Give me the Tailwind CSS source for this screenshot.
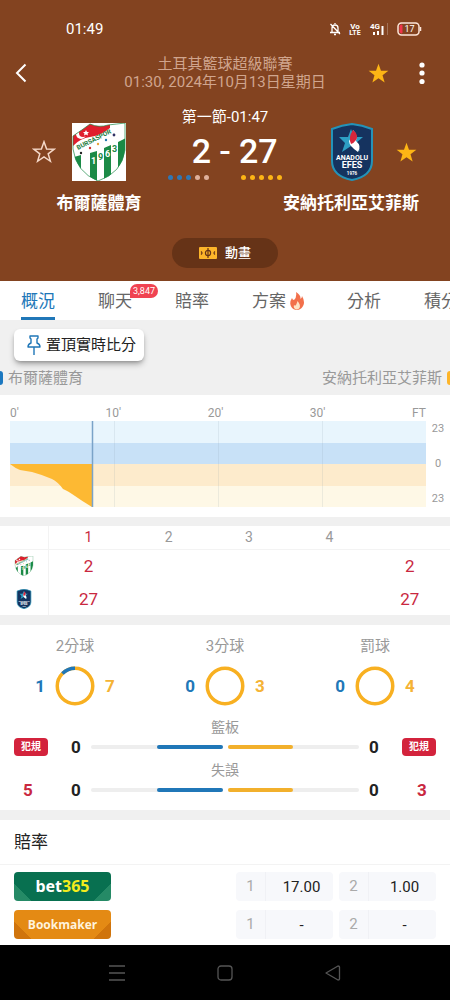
<!DOCTYPE html>
<html lang="zh-Hant">
<head>
    <meta charset="UTF-8">
    <meta name="viewport" content="width=device-width, initial-scale=1.0">
    <title>布爾薩體育 - 安納托利亞艾菲斯</title>
    <script src="https://cdn.jsdelivr.net/npm/@tailwindcss/browser@4"></script>
</head>
<body class="bg-[#f0f0f0] min-h-screen flex flex-col overflow-x-hidden font-['Roboto','Noto_Sans_CJK_TC',sans-serif] text-[15px] leading-5 text-[#222]">
    <!-- 隊徽 -->
    <svg class="absolute w-0 h-0">
        <clipPath id="bursaClip"><path d="M1 13Q10 7 18 1Q27 5 36 2Q45 1 53 0V27Q50 50 26 58Q4 49 1 26Z"/></clipPath>
        <symbol id="bursa" viewBox="0 0 54 58">
            <g clip-path="url(#bursaClip)">
                <path fill="#fff" d="M0 0h54v58H0z"/>
                <path fill="#1b8a46" d="M2 34l7-2v26H2zM18 30l7-2v30h-7zM32 25l7-3v36h-7zM46 19l8-4v43h-8z"/>
                <path fill="#e01e2d" d="M0 0h38V5Q28 13 18 14Q8 15 0 24Z"/>
                <circle cx="9" cy="11" r="5" fill="#fff"/>
                <circle cx="11" cy="10" r="4" fill="#e01e2d"/>
                <path fill="#fff" d="M14 7l1 2 2 0-1.500 1.500.5 2-2-1-2 1 .5-2L11 9h2z"/>
                <path fill="#fff" d="M1 24Q12 17 28 12Q40 9 48 1l5 10Q40 20 26 24Q12 28 3 32Z"/>
                <circle cx="9" cy="30" r="1.200" fill="#222"/><circle cx="18" cy="25" r="1.200" fill="#c33"/>
                <circle cx="26" cy="21" r="1.200" fill="#e8a33a"/><circle cx="34" cy="17" r="1.200" fill="#27a"/>
                <circle cx="42" cy="12" r="1.400" fill="#336"/>
            </g>
            <path d="M1 13Q10 7 18 1Q27 5 36 2Q45 1 53 0V27Q50 50 26 58Q4 49 1 26Z" fill="none" stroke="#1b8a46" stroke-width=".7"/>
            <text x="6" y="27" transform="rotate(-27 6 27)" font-size="6.500" font-weight="700" fill="#1b7a40">BURSASPOR</text>
            <g font-size="9" font-weight="700">
                <text x="19" y="41" fill="#fff">1</text><text x="26" y="37" fill="#1b8a46">9</text>
                <text x="33" y="34" fill="#fff">6</text><text x="40" y="29" fill="#1b8a46">3</text>
            </g>
        </symbol>
        <symbol id="efes" viewBox="0 0 44 58">
            <path d="M22 1Q32 2 42 6V38Q42 53 22 57Q2 53 2 38V6Q12 2 22 1Z" fill="#15335f" stroke="#2493b8" stroke-width="2"/>
            <path d="M21 6l3 8 9 0-7 6 4 8-9-5-9 6 3-9-6-6h9z" fill="#2d9fc4"/>
            <path d="M23 7Q28 12 26 18Q32 23 28 29Q19 23 19 18Q22 14 23 7Z" fill="#fff"/>
            <path d="M23 7Q29 12 26 17Q24 20 21 21Q18 14 23 7Z" fill="#d8263c"/>
            <g fill="#fff" font-weight="700" text-anchor="middle">
                <text x="22" y="37" font-size="7">ANADOLU</text>
                <text x="22" y="45" font-size="9">EFES</text>
                <text x="22" y="52" font-size="4.500">1976</text>
            </g>
        </symbol>
        <symbol id="star" viewBox="0 0 24 24">
            <path d="M12 1.800l2.600 7.200 7.700.2-6.100 4.700 2.200 7.400L12 17l-6.400 4.300 2.200-7.400L1.700 9.200l7.700-.2z"/>
        </symbol>
    </svg>

    <header class="bg-[#834320] text-white pb-[13px]">
        <!-- ステータスバー -->
        <div class="flex items-center justify-between pl-[66px] pr-7 pt-[19px] leading-5">
            <span class="text-[15px]">01:49</span>
            <div class="flex items-center gap-2">
                <svg class="w-3 h-3.5" viewBox="0 0 12 14" fill="none" stroke="#fff" stroke-width="1.300">
                    <path d="M6 1v1M3 10.500V6Q3 3 6 3T9 6v4.500M1 10.500h10M5 12.500h2M1.500 2l9.500 10"/>
                </svg>
                <svg class="w-3 h-3.5" viewBox="0 0 12 14" fill="#fff" font-weight="700" text-anchor="middle">
                    <text x="6" y="7" font-size="8">Vo</text>
                    <text x="6" y="13" font-size="7">LTE</text>
                </svg>
                <svg class="w-5 h-3.5" viewBox="0 0 20 14" fill="#fff">
                    <text x="1" y="7" font-size="8" font-weight="700">4G</text>
                    <path d="M4 10h2v3H4zM8 9h2v4H8zM12.500 4h2v9h-2z"/>
                    <path d="M18 1h1v12h-1z" opacity=".25"/>
                </svg>
                <svg class="w-[25px] h-3.5" viewBox="0 0 25 14">
                    <rect x="1" y="1" width="21" height="12" rx="3.500" fill="none" stroke="#fde5d8" stroke-width="1.500"/>
                    <path d="M3 4Q3 3 5 3V11Q3 11 3 10Z" fill="#f0344a" stroke="#f0344a"/>
                    <path d="M23.500 5v4" stroke="#fde5d8" stroke-width="1.500"/>
                    <text x="12.500" y="10" font-size="9" fill="#fff" text-anchor="middle">17</text>
                </svg>
            </div>
        </div>

        <!-- 聯賽標題 -->
        <div class="grid grid-cols-[1fr_auto_1fr] items-center px-3 mt-4">
            <button class="justify-self-start" aria-label="返回">
                <svg class="w-5 h-6" viewBox="0 0 20 24" fill="none" stroke="#fff" stroke-width="2"><path d="M13.500 3.500L5 12l8.500 8.500"/></svg>
            </button>
            <h1 class="text-center text-[15px] leading-[18px] text-[#d0a58e]">土耳其籃球超級聯賽<br>01:30, 2024年10月13日星期日</h1>
            <div class="flex items-center justify-self-end gap-6 pr-2">
                <button aria-label="收藏比賽"><svg class="w-[23px] h-[23px] fill-[#fdb515]"><use href="#star"/></svg></button>
                <button aria-label="更多">
                    <svg class="w-4 h-6" viewBox="0 0 16 24" fill="#fff"><circle cx="8" cy="4" r="2.600"/><circle cx="8" cy="12" r="2.600"/><circle cx="8" cy="20.500" r="2.600"/></svg>
                </button>
            </div>
        </div>

        <!-- 比分 -->
        <div class="grid grid-cols-3 px-9 mt-4">
            <div class="flex flex-col items-center pt-4">
                <div class="flex items-center gap-4">
                    <button aria-label="收藏布爾薩體育"><svg class="w-6 h-6 fill-none stroke-[#f5d8c8]" stroke-width="1.500"><use href="#star"/></svg></button>
                    <span class="bg-white"><svg class="w-[54px] h-[58px]"><use href="#bursa"/></svg></span>
                    <span class="w-6"></span>
                </div>
                <h2 class="text-[17px] leading-6 font-bold whitespace-nowrap mt-2.5">布爾薩體育</h2>
            </div>
            <div>
                <p class="text-center whitespace-nowrap">第一節-01:47</p>
                <div class="grid grid-cols-[1fr_28px_1fr] text-center text-[34px] leading-10 font-medium mt-1">
                    <span class="text-right">2</span><span>-</span><span class="text-left">27</span>
                </div>
                <div class="grid grid-cols-2 gap-8 mt-1">
                    <div class="flex justify-end gap-1">
                        <i class="w-[5px] h-[5px] rounded-full bg-[#2f77b5]"></i><i class="w-[5px] h-[5px] rounded-full bg-[#2f77b5]"></i><i class="w-[5px] h-[5px] rounded-full bg-[#2f77b5]"></i><i class="w-[5px] h-[5px] rounded-full bg-[#dfb09c]"></i><i class="w-[5px] h-[5px] rounded-full bg-[#dfb09c]"></i>
                    </div>
                    <div class="flex justify-start gap-1">
                        <i class="w-[5px] h-[5px] rounded-full bg-[#fdb515]"></i><i class="w-[5px] h-[5px] rounded-full bg-[#fdb515]"></i><i class="w-[5px] h-[5px] rounded-full bg-[#fdb515]"></i><i class="w-[5px] h-[5px] rounded-full bg-[#fdb515]"></i><i class="w-[5px] h-[5px] rounded-full bg-[#fdb515]"></i>
                    </div>
                </div>
            </div>
            <div class="flex flex-col items-center pt-4">
                <div class="flex items-center gap-4">
                    <span class="w-6"></span>
                    <svg class="w-[54px] h-[58px]"><use href="#efes"/></svg>
                    <button aria-label="收藏安納托利亞艾菲斯"><svg class="w-[23px] h-[23px] fill-[#fdb515]"><use href="#star"/></svg></button>
                </div>
                <h2 class="text-[17px] leading-6 font-bold whitespace-nowrap mt-2.5">安納托利亞艾菲斯</h2>
            </div>
        </div>

        <button class="flex items-center justify-center gap-2 mx-auto mt-[23px] w-[106px] h-[30px] rounded-full bg-[#663317] text-[13px] font-medium">
            <svg class="w-[18px] h-3" viewBox="0 0 18 12" fill="none" stroke="#663317" stroke-width="1.200">
                <rect width="18" height="12" rx="1" fill="#fdb52a" stroke="none"/>
                <circle cx="9" cy="6" r="2.600"/><path d="M9 1v10M2 4.500q2 1.500 0 3M16 4.500q-2 1.500 0 3"/>
            </svg>
            動畫
        </button>
    </header>

    <!-- タブ -->
    <nav class="bg-white flex gap-[43px] pl-[21px] h-[39px] overflow-hidden text-[17px] leading-10 text-[#666] whitespace-nowrap">
        <a href="#" class="shrink-0 h-[39px] text-[#2077b8] border-b-3 border-[#2077b8]">概況</a>
        <a href="#" class="shrink-0 relative">聊天<span class="absolute left-8 top-[3px] h-3.5 px-[3px] rounded-full rounded-bl-none bg-[#f04352] text-white text-[9px] leading-[14px]">3,847</span></a>
        <a href="#" class="shrink-0">賠率</a>
        <a href="#" class="shrink-0 flex items-center gap-1">方案
            <svg class="w-3.5 h-[18px]" viewBox="0 0 14 18">
                <path d="M6 0Q11 3 10.500 7Q12 6 12 4Q15 9 13.500 13Q12 17 8 18H6Q1 17 .3 12Q0 9 2 6Q2.500 8 4 8Q7 5 6 0Z" fill="#f2704b"/>
                <path d="M7.500 9Q11 13 9.500 16Q8 18 6 17.500Q3 16 4 13Q5 14 6 13Q7 11 7.500 9Z" fill="#fde3c5"/>
            </svg>
        </a>
        <a href="#" class="shrink-0">分析</a>
        <a href="#" class="shrink-0">積分</a>
    </nav>

    <main>
        <div class="px-3.5 pt-[9px]">
            <button class="flex items-center gap-1 h-8 pl-3 pr-2 rounded-md bg-white shadow-md shadow-black/30">
                <svg class="w-4 h-5" viewBox="0 0 16 20" fill="none" stroke="#2077b8" stroke-width="1.400" stroke-linejoin="round">
                    <path d="M4 1h8v2l-1 1v4q3 1 3 4H2q0-3 3-4V4L4 3zM8 12v8"/>
                </svg>
                置頂實時比分
            </button>
        </div>
        <div class="flex items-center justify-between mt-[7px] mb-[7px] text-[#999]">
            <span class="flex items-center gap-[5px]"><i class="w-[3px] h-3.5 rounded-r-sm bg-[#1c78c0]"></i>布爾薩體育</span>
            <span class="flex items-center gap-[5px]">安納托利亞艾菲斯<i class="w-[3px] h-3.5 rounded-l-sm bg-[#fdb52a]"></i></span>
        </div>

        <!-- 走勢圖 -->
        <section class="bg-white grid grid-cols-[1fr_24px] pl-2.5 py-2.5 text-[#999]">
            <div class="flex justify-between text-xs leading-4">
                <span>0'</span><span>10'</span><span>20'</span><span>30'</span><span>FT</span>
            </div>
            <span></span>
            <svg class="w-full h-[86px]" viewBox="0 0 416 86" preserveAspectRatio="none">
                <path fill="#e8f5fd" d="M0 0h416v22H0z"/>
                <path fill="#c8e1f7" d="M0 22h416v21H0z"/>
                <path fill="#fdebcc" d="M0 43h416v22H0z"/>
                <path fill="#fef8e6" d="M0 65h416v21H0z"/>
                <path stroke="#8899aa" stroke-opacity=".15" d="M104.500 0v86M208.500 0v86M312.500 0v86"/>
                <path fill="#fdb933" d="M0 43h82v43Q72 80 65 75Q58 70 53 68Q48 61 42 58Q33 54 22 51L10 49Q5 47 0 43Z"/>
                <path stroke="#7aa3c8" stroke-width="1.500" d="M82.500 0v86"/>
            </svg>
            <div class="flex flex-col justify-between items-center text-[11px] leading-4">
                <span>23</span><span>0</span><span>23</span>
            </div>
        </section>

        <!-- 各節比分 -->
        <section class="bg-white mt-[9px]">
            <table class="w-full table-fixed text-center text-[#c9283f] text-[17px]">
                <thead>
                    <tr class="h-[23px] border-b border-[#f3f3f3] text-sm text-[#999]">
                        <th class="w-12 border-r border-[#f3f3f3]"></th>
                        <th class="font-normal text-[#c9283f]">1</th>
                        <th class="font-normal">2</th>
                        <th class="font-normal">3</th>
                        <th class="font-normal">4</th>
                        <th></th>
                    </tr>
                </thead>
                <tbody>
                    <tr class="h-[34px]">
                        <td class="border-r border-[#f3f3f3]"><svg class="w-5 h-5 mx-auto"><use href="#bursa"/></svg></td>
                        <td>2</td><td></td><td></td><td></td><td>2</td>
                    </tr>
                    <tr class="h-8">
                        <td class="border-r border-[#f3f3f3]"><svg class="w-5 h-5 mx-auto"><use href="#efes"/></svg></td>
                        <td>27</td><td></td><td></td><td></td><td>27</td>
                    </tr>
                </tbody>
            </table>
        </section>

        <!-- 技術統計 -->
        <section class="bg-white mt-2.5 pt-[11px] pb-2.5">
            <div class="grid grid-cols-3 text-center text-[#999]">
                <div>
                    <p>2分球</p>
                    <div class="flex items-center justify-center gap-2.5 mt-2.5 text-[17px] font-bold">
                        <span class="text-[#2077b8]">1</span>
                        <svg class="w-10 h-10 -rotate-90" viewBox="0 0 40 40" fill="none" stroke-width="3.500">
                            <circle cx="20" cy="20" r="17.750" stroke="#f8b021"/>
                            <circle cx="20" cy="20" r="17.750" stroke="#2077b8" pathLength="8" stroke-dasharray="1 7" stroke-dashoffset="-7"/>
                        </svg>
                        <span class="text-[#f5b335]">7</span>
                    </div>
                </div>
                <div>
                    <p>3分球</p>
                    <div class="flex items-center justify-center gap-2.5 mt-2.5 text-[17px] font-bold">
                        <span class="text-[#2077b8]">0</span>
                        <svg class="w-10 h-10" viewBox="0 0 40 40" fill="none" stroke-width="3.500"><circle cx="20" cy="20" r="17.750" stroke="#f8b021"/></svg>
                        <span class="text-[#f5b335]">3</span>
                    </div>
                </div>
                <div>
                    <p>罰球</p>
                    <div class="flex items-center justify-center gap-2.5 mt-2.5 text-[17px] font-bold">
                        <span class="text-[#2077b8]">0</span>
                        <svg class="w-10 h-10" viewBox="0 0 40 40" fill="none" stroke-width="3.500"><circle cx="20" cy="20" r="17.750" stroke="#f8b021"/></svg>
                        <span class="text-[#f5b335]">4</span>
                    </div>
                </div>
            </div>

            <p class="text-center text-sm text-[#999] leading-5 mt-[11px]">籃板</p>
            <div class="grid grid-cols-[34px_1fr_34px] gap-x-5 items-center px-3.5 text-[17px] font-bold">
                <span class="h-[18px] rounded bg-[#d3233c] text-white text-[10px] leading-[18px] text-center">犯規</span>
                <div class="flex items-center gap-[7px]">
                    <span class="w-4 text-center">0</span>
                    <div class="flex-1 grid grid-cols-2 gap-[5px]">
                        <div class="h-1 rounded-full bg-[#eee] flex justify-end"><div class="h-1 rounded-full bg-[#2077b8]" style="width: 50%"></div></div>
                        <div class="h-1 rounded-full bg-[#eee]"><div class="h-1 rounded-full bg-[#f2b02c]" style="width: 50%"></div></div>
                    </div>
                    <span class="w-4 text-center">0</span>
                </div>
                <span class="h-[18px] rounded bg-[#d3233c] text-white text-[10px] leading-[18px] text-center">犯規</span>
            </div>
            <p class="text-center text-sm text-[#999] leading-5 mt-[3px]">失誤</p>
            <div class="grid grid-cols-[34px_1fr_34px] gap-x-5 items-center px-3.5 text-[17px] font-bold">
                <span class="text-[#c9283f] text-center pr-1.5">5</span>
                <div class="flex items-center gap-[7px]">
                    <span class="w-4 text-center">0</span>
                    <div class="flex-1 grid grid-cols-2 gap-[5px]">
                        <div class="h-1 rounded-full bg-[#eee] flex justify-end"><div class="h-1 rounded-full bg-[#2077b8]" style="width: 50%"></div></div>
                        <div class="h-1 rounded-full bg-[#eee]"><div class="h-1 rounded-full bg-[#f2b02c]" style="width: 50%"></div></div>
                    </div>
                    <span class="w-4 text-center">0</span>
                </div>
                <span class="text-[#c9283f] text-center pl-1.5">3</span>
            </div>
        </section>

        <!-- 賠率 -->
        <section class="bg-white mt-2.5 pb-1.5">
            <h2 class="px-3.5 py-3 text-[17px] leading-5 border-b border-[#f3f3f3]">賠率</h2>
            <div class="grid gap-[9px] px-3.5 pt-[7px]">
                <div class="flex items-center gap-1.5">
                    <a href="#" class="w-[97px] h-[29px] rounded bg-[linear-gradient(45deg,#258a66_14%,transparent_14%),linear-gradient(-45deg,#258a66_14%,transparent_14%)] bg-[#087050] text-center text-base leading-[29px] font-bold mr-auto font-['Noto_Sans',sans-serif] text-white">bet<span class="text-[#f5ec1c]">365</span></a>
                    <button class="flex h-[29px] w-[97px] rounded bg-[#f7f8fb] items-center">
                        <span class="w-[30px] leading-[29px] border-r border-[#f0f1f5] text-[#aaa]">1</span><span class="flex-1 pl-1">17.00</span>
                    </button>
                    <button class="flex h-[29px] w-[97px] rounded bg-[#f7f8fb] items-center">
                        <span class="w-[30px] leading-[29px] border-r border-[#f0f1f5] text-[#aaa]">2</span><span class="flex-1 pl-1">1.00</span>
                    </button>
                </div>
                <div class="flex items-center gap-1.5">
                    <a href="#" class="w-[97px] h-[29px] rounded bg-[linear-gradient(45deg,#d0740c_14%,transparent_14%),linear-gradient(-45deg,#d0740c_14%,transparent_14%)] bg-[#e48a14] text-center text-xs leading-[29px] font-bold mr-auto font-['Open_Sans',sans-serif] text-[#fff3dc]">Bookmaker</a>
                    <button class="flex h-[29px] w-[97px] rounded bg-[#f7f8fb] items-center">
                        <span class="w-[30px] leading-[29px] border-r border-[#f0f1f5] text-[#aaa]">1</span><span class="flex-1 pl-1">-</span>
                    </button>
                    <button class="flex h-[29px] w-[97px] rounded bg-[#f7f8fb] items-center">
                        <span class="w-[30px] leading-[29px] border-r border-[#f0f1f5] text-[#aaa]">2</span><span class="flex-1 pl-1">-</span>
                    </button>
                </div>
            </div>
        </section>
    </main>

    <!-- システムナビ -->
    <footer class="bg-black grow flex justify-center gap-[90px] h-[54px] items-center">
        <button aria-label="最近"><svg class="w-[18px] h-[18px]" viewBox="0 0 18 18" stroke="#555" stroke-width="1.300"><path d="M1 2h16M1 9h16M1 16h16"/></svg></button>
        <button aria-label="主畫面"><svg class="w-[18px] h-[18px]" viewBox="0 0 18 18" fill="none" stroke="#555" stroke-width="1.300"><rect x="2" y="2" width="14" height="14" rx="3"/></svg></button>
        <button aria-label="返回上頁"><svg class="w-[18px] h-[18px]" viewBox="0 0 18 18" fill="none" stroke="#555" stroke-width="1.300" stroke-linejoin="round"><path d="M2 9L14 2q1.500 0 1.500 1v12q0 1-1.500 1z"/></svg></button>
    </footer>
</body>
</html>
